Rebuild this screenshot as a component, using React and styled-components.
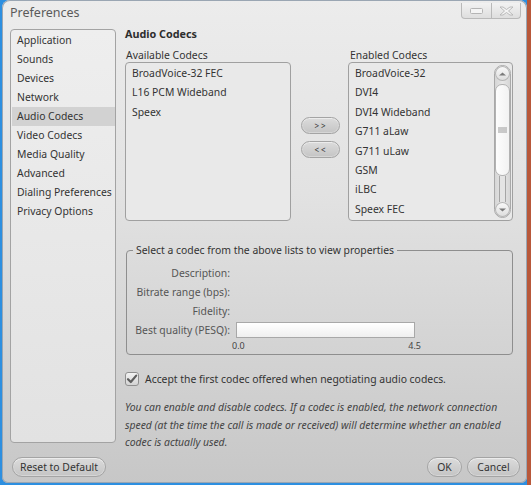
import React from "react";
import styled, { createGlobalStyle } from "styled-components";

const Global = createGlobalStyle`
  html, body { margin: 0; padding: 0; }
  body {
    width: 531px;
    height: 485px;
    overflow: hidden;
    font-family: "Noto Sans", "Open Sans", sans-serif;
    font-size: 10.4px;
    color: #333;
  }
`;

const Desktop = styled.div`
  width: 531px;
  height: 485px;
  box-sizing: border-box;
  padding: 0 4px 2px 2px;
  background: linear-gradient(to right, #2d8fe0 0, #2d8fe0 527px, #b8583a 527px);
`;

const Window = styled.div`
  height: 483px;
  display: flex;
  flex-direction: column;
  border-radius: 8px 8px 6px 6px;
  background: linear-gradient(#ececec 0%, #e2e2e2 40%, #c7c7c7 100%);
  box-shadow: inset 0 0 0 1px #9aa6b3;
  overflow: hidden;
`;

const TitleBar = styled.div`
  flex: none;
  height: 27px;
  display: flex;
  align-items: flex-start;
  justify-content: space-between;
  padding: 0 6px 0 8px;
`;

const Title = styled.div`
  font-size: 12.5px;
  line-height: 26px;
  color: #5a5a5a;
`;

const Caption = styled.div`
  margin-top: 3px;
  display: flex;
  border: 1px solid #b9b9b9;
  border-top: none;
  border-radius: 0 0 4px 4px;
  background: linear-gradient(#f2f2f2, #dedede);
`;

const CaptionBtn = styled.div`
  width: ${(p) => p.$w}px;
  height: 15px;
  display: flex;
  align-items: center;
  justify-content: center;
  & + & { border-left: 1px solid #b9b9b9; }
`;

const Body = styled.div`
  flex: 0 0 416px;
  min-height: 0;
  display: flex;
  gap: 9px;
  padding: 0 14px 0 8px;
`;

const Sidebar = styled.ul`
  flex: none;
  list-style: none;
  margin: 2px 0 0;
  padding: 1px 0 0;
  width: 106px;
  height: 414px;
  box-sizing: border-box;
  border: 1px solid #a3a3a3;
  border-radius: 4px;
  background: linear-gradient(#eeeeee, #e2e2e2);
`;

const NavItem = styled.li`
  margin: 0 0 0 1px;
  padding-left: 5px;
  height: 19px;
  line-height: 19px;
  white-space: nowrap;
  color: #333;
  background: ${(p) => (p.$active ? "#d2d2d2" : "transparent")};
`;

const Main = styled.div`
  flex: 1;
  display: flex;
  flex-direction: column;
`;

const Heading = styled.div`
  font-weight: bold;
  font-size: 10.8px;
  line-height: 14px;
  color: #2e2e2e;
`;

const ListsRow = styled.div`
  margin-top: 7px;
  display: grid;
  grid-template-columns: 166px 57px 165px;
`;

const ListColumn = styled.div`
  display: flex;
  flex-direction: column;
`;

const ListLabel = styled.div`
  line-height: 14px;
  padding-left: ${(p) => p.$indent || 1}px;
  color: #333;
`;

const ListBox = styled.div`
  height: 159px;
  box-sizing: border-box;
  border: 1px solid #a0a0a0;
  border-radius: 4px;
  background: #e9e9e9;
  display: flex;
`;

const Items = styled.div`
  flex: 1;
  padding: 1px 0 0 6px;
`;

const Item = styled.div`
  line-height: 19.4px;
  color: #333;
  white-space: nowrap;
`;

const MoveColumn = styled.div`
  display: flex;
  flex-direction: column;
  align-items: center;
  gap: 7px;
  padding: 69px 0 0 1px;
`;

const PillButton = styled.button`
  font-family: inherit;
  font-size: ${(p) => p.$size || 10.4}px;
  color: #333;
  width: ${(p) => p.$w}px;
  height: ${(p) => p.$h || 20}px;
  padding: 0;
  border: 1px solid #a4a4a4;
  border-radius: 10px;
  background: linear-gradient(#dcdcdc, #c4c4c4);
  box-shadow: inset 0 1px 0 #ececec, inset 0 0 0 1px #d6d6d6;
  line-height: 1;
`;

const Scrollbar = styled.div`
  width: 17px;
  margin: 2px 1px 2px 0;
  box-sizing: border-box;
  border: 1px solid #a9a9a9;
  border-radius: 9px;
  background: linear-gradient(to right, #d6d6d6, #e6e6e6, #d6d6d6);
  display: flex;
  flex-direction: column;
  align-items: center;
`;

const Arrow = styled.div`
  width: 15px;
  height: 15px;
  border-radius: 50%;
  background: linear-gradient(#fafafa, #dcdcdc);
  box-shadow: inset 0 0 0 1px #b5b5b5;
  display: flex;
  align-items: center;
  justify-content: center;
`;

const Thumb = styled.div`
  margin-top: 3px;
  width: 15px;
  height: 92px;
  box-sizing: border-box;
  border: 1px solid #b2b2b2;
  border-radius: 7px;
  background: linear-gradient(to right, #fdfdfd, #f2f2f2);
  display: flex;
  align-items: center;
  justify-content: center;
`;

const Groove = styled.div`
  flex: 1;
  width: 5px;
  border-left: 1px solid #a5a5a5;
  border-right: 1px solid #a5a5a5;
  background: #e4e4e4;
`;

const Group = styled.fieldset`
  margin: 22px 0 0 1px;
  padding: 0 0 1px 6px;
  border: 1px solid #8e8e8e;
  border-radius: 4px;
  min-width: 0;
`;

const Legend = styled.legend`
  padding: 0 3px;
  line-height: 14px;
  color: #333;
`;

const Props = styled.div`
  margin-top: 6px;
  display: grid;
  grid-template-columns: 97px 1fr;
  grid-template-rows: repeat(4, 19px) 14px;
  column-gap: 6px;
  align-items: center;
`;

const PropLabel = styled.div`
  text-align: right;
  color: #555;
  white-space: nowrap;
`;

const Meter = styled.div`
  width: 179px;
  height: 16px;
  box-sizing: border-box;
  border: 1px solid #a8a8a8;
  background: linear-gradient(#ffffff, #efefef);
`;

const Scale = styled.div`
  grid-column: 2;
  width: 189px;
  margin-left: -4px;
  display: flex;
  justify-content: space-between;
  font-size: 9px;
  line-height: 12px;
  color: #444;
`;

const CheckRow = styled.label`
  margin-top: 17px;
  height: 14px;
  display: flex;
  align-items: center;
  gap: 6px;
  line-height: 14px;
  color: #333;
`;

const Note = styled.p`
  margin: 13px 0 0;
  font-style: italic;
  line-height: 17.5px;
  color: #444;
`;

const Footer = styled.div`
  flex: none;
  height: 40px;
  display: flex;
  align-items: flex-start;
  padding: 14px 7px 0 10px;
  gap: 5px;
`;

const Spacer = styled.div`
  flex: 1;
`;

const nav = [
  "Application",
  "Sounds",
  "Devices",
  "Network",
  "Audio Codecs",
  "Video Codecs",
  "Media Quality",
  "Advanced",
  "Dialing Preferences",
  "Privacy Options",
];

const available = ["BroadVoice-32 FEC", "L16 PCM Wideband", "Speex"];
const enabled = [
  "BroadVoice-32",
  "DVI4",
  "DVI4 Wideband",
  "G711 aLaw",
  "G711 uLaw",
  "GSM",
  "iLBC",
  "Speex FEC",
];

function Chevron({ down }) {
  return (
    <svg width="9" height="6" viewBox="0 0 9 6">
      <path
        d={down ? "M1 1.5 L4.5 4.5 L8 1.5 Z" : "M1 4.5 L4.5 1.5 L8 4.5 Z"}
        fill="#7a7a7a"
      />
    </svg>
  );
}

export default function App() {
  return (
    <Desktop>
      <Global />
      <Window>
        <TitleBar>
          <Title>Preferences</Title>
          <Caption>
            <CaptionBtn $w={29}>
              <svg width="13" height="6" viewBox="0 0 13 6">
                <rect x="0.5" y="0.5" width="12" height="5" rx="1" fill="#f4f4f4" stroke="#b4b4b4" />
              </svg>
            </CaptionBtn>
            <CaptionBtn $w={28}>
              <svg width="15" height="10" viewBox="0 0 15 10">
                <path
                  d="M1 1 H4 L7.5 3.5 L11 1 H14 L9.5 5 L14 9 H11 L7.5 6.5 L4 9 H1 L5.5 5 Z"
                  fill="#f4f4f4"
                  stroke="#b4b4b4"
                  strokeWidth="0.9"
                  strokeLinejoin="round"
                />
              </svg>
            </CaptionBtn>
          </Caption>
        </TitleBar>

        <Body>
          <Sidebar>
            {nav.map((n) => (
              <NavItem key={n} $active={n === "Audio Codecs"}>
                {n}
              </NavItem>
            ))}
          </Sidebar>

          <Main>
            <Heading>Audio Codecs</Heading>
            <ListsRow>
              <ListColumn>
                <ListLabel>Available Codecs</ListLabel>
                <ListBox>
                  <Items>
                    {available.map((c) => (
                      <Item key={c}>{c}</Item>
                    ))}
                  </Items>
                </ListBox>
              </ListColumn>

              <MoveColumn>
                <PillButton $w={39} $h={17} $size={8}>&gt; &gt;</PillButton>
                <PillButton $w={39} $h={17} $size={8}>&lt; &lt;</PillButton>
              </MoveColumn>

              <ListColumn>
                <ListLabel $indent={2}>Enabled Codecs</ListLabel>
                <ListBox>
                  <Items>
                    {enabled.map((c) => (
                      <Item key={c}>{c}</Item>
                    ))}
                  </Items>
                  <Scrollbar>
                    <Arrow>
                      <Chevron />
                    </Arrow>
                    <Thumb>
                      <svg width="9" height="6" viewBox="0 0 9 6">
                        <path d="M0 1 H9 M0 3 H9 M0 5 H9" stroke="#9a9a9a" strokeWidth="1" />
                      </svg>
                    </Thumb>
                    <Groove />
                    <Arrow>
                      <Chevron down />
                    </Arrow>
                  </Scrollbar>
                </ListBox>
              </ListColumn>
            </ListsRow>

            <Group>
              <Legend>Select a codec from the above lists to view properties</Legend>
              <Props>
                <PropLabel>Description:</PropLabel>
                <span />
                <PropLabel>Bitrate range (bps):</PropLabel>
                <span />
                <PropLabel>Fidelity:</PropLabel>
                <span />
                <PropLabel>Best quality (PESQ):</PropLabel>
                <Meter />
                <Scale>
                  <span>0.0</span>
                  <span>4.5</span>
                </Scale>
              </Props>
            </Group>

            <CheckRow>
              <svg width="14" height="14" viewBox="0 0 14 14">
                <defs>
                  <linearGradient id="cb" x1="0" y1="0" x2="0" y2="1">
                    <stop offset="0" stopColor="#f4f4f4" />
                    <stop offset="1" stopColor="#d2d2d2" />
                  </linearGradient>
                </defs>
                <rect x="0.5" y="0.5" width="13" height="13" rx="2.5" fill="url(#cb)" stroke="#8f8f8f" />
                <path
                  d="M3 7.2 L5.8 10 L11.2 3.6"
                  fill="none"
                  stroke="#5e5e5e"
                  strokeWidth="2.2"
                  strokeLinecap="round"
                  strokeLinejoin="round"
                />
              </svg>
              Accept the first codec offered when negotiating audio codecs.
            </CheckRow>

            <Note>
              You can enable and disable codecs. If a codec is enabled, the network connection
              speed (at the time the call is made or received) will determine whether an enabled
              codec is actually used.
            </Note>
          </Main>
        </Body>

        <Footer>
          <PillButton $w={94}>Reset to Default</PillButton>
          <Spacer />
          <PillButton $w={35}>OK</PillButton>
          <PillButton $w={53}>Cancel</PillButton>
        </Footer>
      </Window>
    </Desktop>
  );
}
